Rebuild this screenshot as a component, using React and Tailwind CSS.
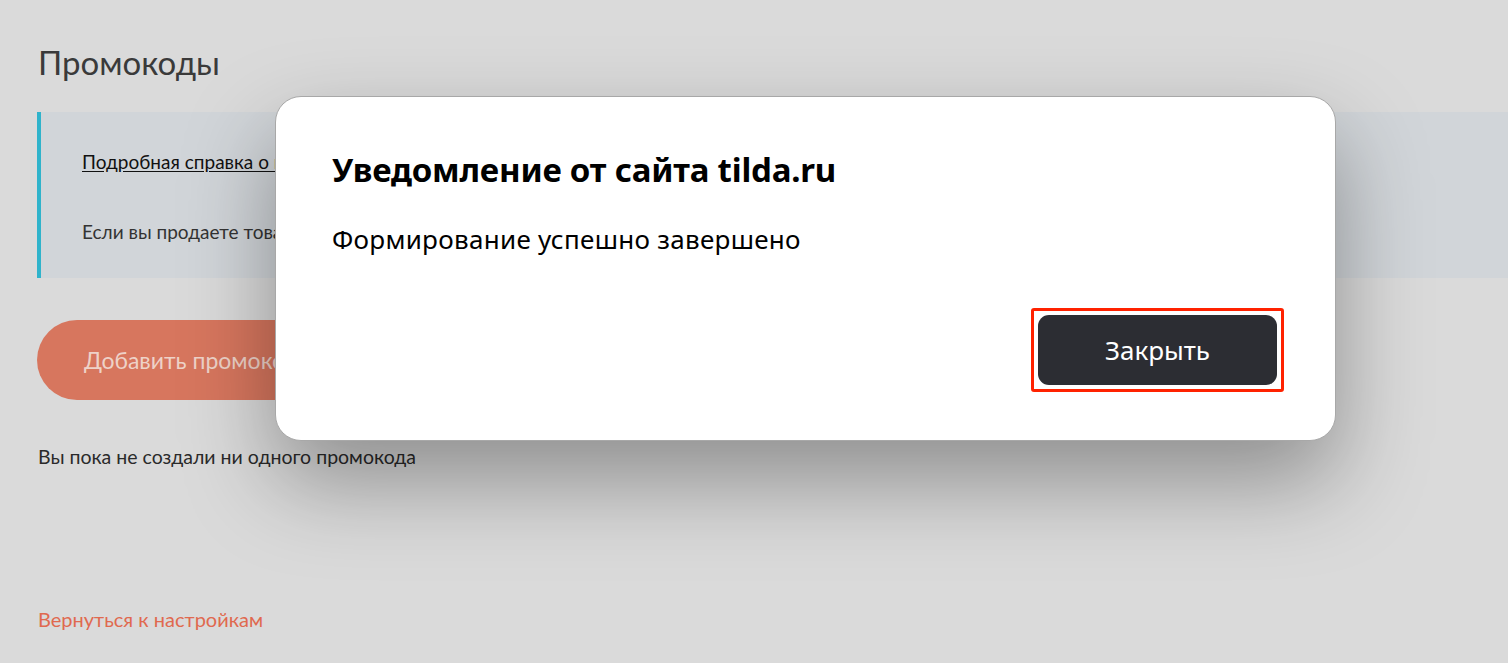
export default function App() {
  return (
    <div className="relative w-[1508px] h-[663px] overflow-hidden bg-[#dadada]" style={{ fontFamily: 'Lato, "Noto Sans", sans-serif' }}>
      <div className="pt-[40px]">
        <h1 className="pl-[38px] text-[33px] leading-[44px] text-[#3a3a3a] font-normal">Промокоды</h1>
        <div className="ml-[37px] mt-[28px] h-[166px] bg-[#d1d5d9] border-l-[4px] border-[#2fb3cb] pl-[41px] pt-[38px] flex flex-col">
          <a className="text-[19px] leading-[24px] text-[#111] underline underline-offset-2">Подробная справка о промокодах</a>
          <p className="mt-[46px] text-[19px] leading-[24px] text-[#333]">Если вы продаете товары через корзину, вы можете создать промокоды</p>
        </div>
        <div className="ml-[37px] mt-[42px] h-[80px] w-[330px] rounded-full bg-[#d7765e] flex items-center pl-[47px] text-[23px] text-[#eed2c8]">Добавить промокод</div>
        <p className="ml-[38px] mt-[45px] text-[19.5px] leading-[24px] text-[#2a2a2a]">Вы пока не создали ни одного промокода</p>
        <p className="ml-[38px] mt-[138px] text-[20px] leading-[24px] text-[#e0694f]">Вернуться к настройкам</p>
      </div>

      <div className="absolute left-[275px] top-[96px] w-[1061px] h-[345px] bg-white rounded-[26px] border border-[#a8a8a8] shadow-[0_40px_90px_rgba(0,0,0,0.35)] flex flex-col" style={{ fontFamily: '"Noto Sans", "Open Sans", sans-serif' }}>
        <h2 className="ml-[56px] mt-[52px] text-[33px] leading-[42px] font-bold text-black tracking-[-0.2px]">Уведомление от сайта tilda.ru</h2>
        <p className="ml-[56px] mt-[31px] text-[26px] leading-[34px] text-black tracking-[0.3px]">Формирование успешно завершено</p>
        <div className="flex justify-end mr-[51px] mt-[auto] mb-[48px]">
          <div className="p-[4px] border-[3px] border-[#ff2200] rounded-[3px]">
            <button className="w-[239px] h-[70px] rounded-[11px] bg-[#2c2d33] text-white text-[26px]">Закрыть</button>
          </div>
        </div>
      </div>
    </div>
  );
}
